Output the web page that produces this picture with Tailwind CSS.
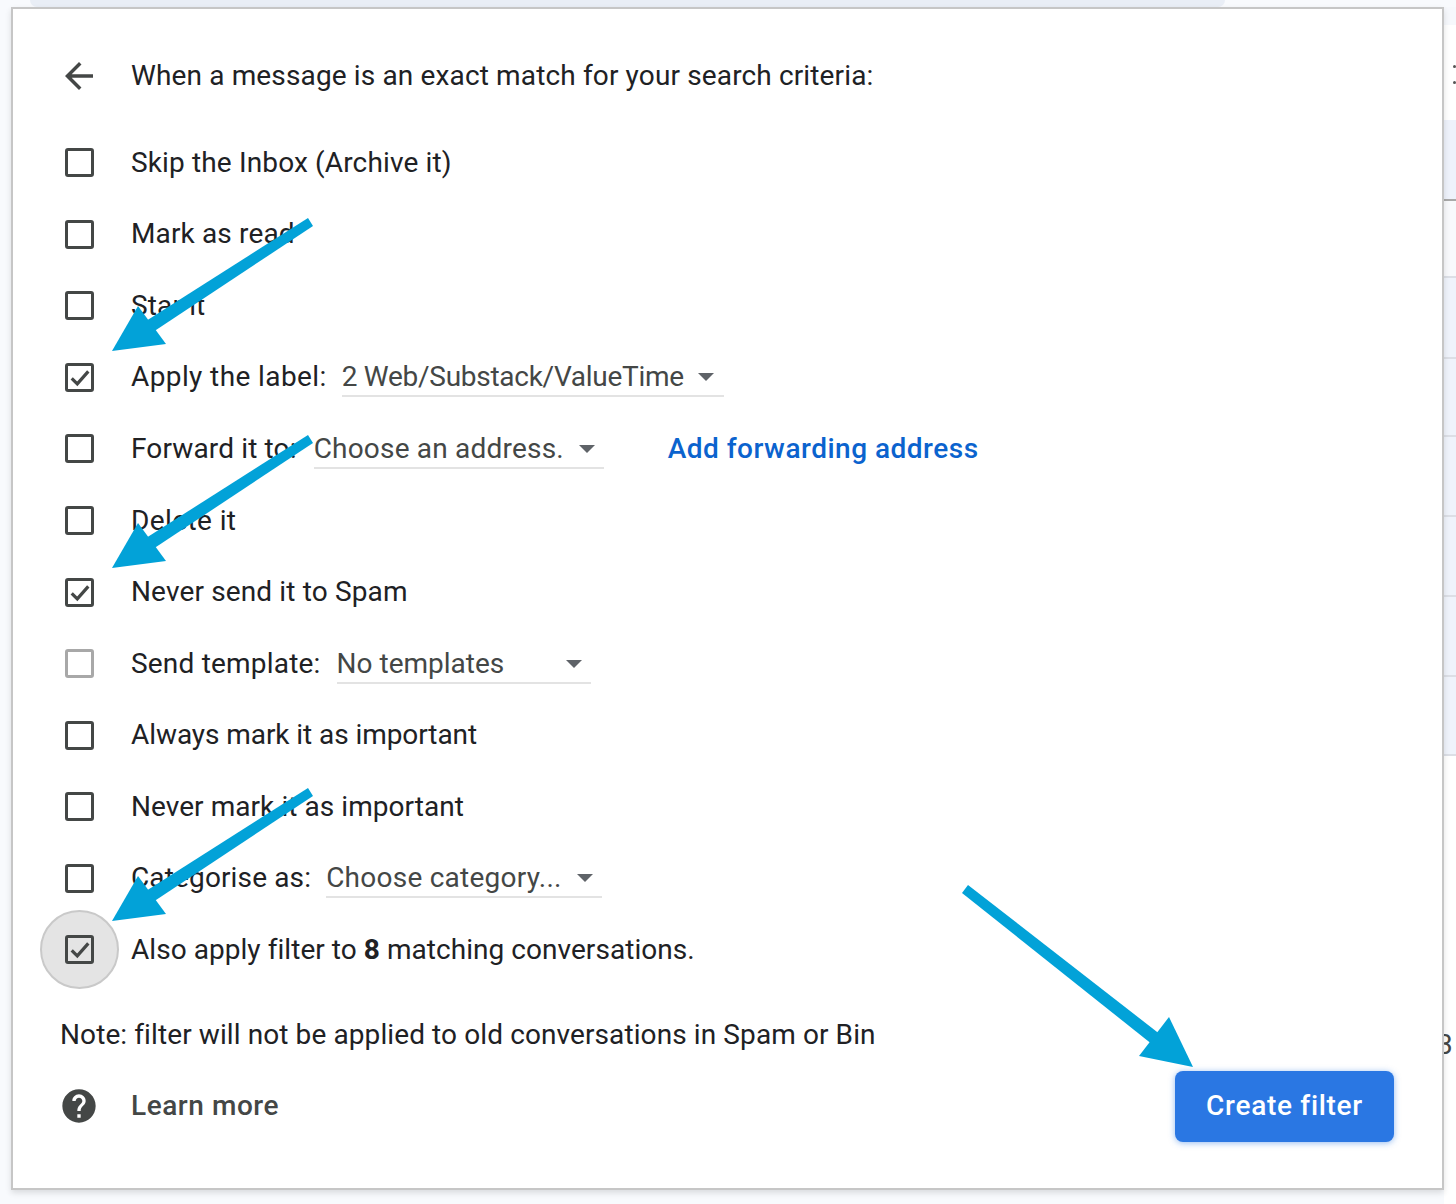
<!DOCTYPE html>
<html lang="en">
<head>
    <meta charset="UTF-8">
    <meta name="viewport" content="width=device-width, initial-scale=1.0">
    <title>Create filter</title>
    <script src="https://cdn.jsdelivr.net/npm/@tailwindcss/browser@4"></script>
</head>
<body class="relative w-[1456px] h-[1204px] overflow-hidden bg-[#f8fafd] [font-family:Roboto,sans-serif] text-[28px] tracking-[0.14px] text-[#202124]">
    <!-- strip of the page behind the dialog -->
    <div class="h-[7px] ml-[30px] w-[1195px] bg-[#e9eef6] rounded-b-[8px]"></div>

    <div class="flex items-start">
        <div class="w-[11px] shrink-0"></div>

        <!-- dialog -->
        <div class="w-[1433px] h-[1183px] shrink-0 bg-white border-2 border-[#c6c6c6] shadow-[0_3px_6px_rgba(0,0,0,0.12)] relative z-10">
            <div class="flex items-center h-[72px] mt-[31px] mb-[15px] pl-[52px]">
                <div class="w-[29px] h-[29px] flex items-center justify-center shrink-0 -translate-x-px">
                    <svg class="w-[42px] h-[42px] shrink-0" viewBox="0 0 24 24" fill="#444746"><path d="M20 11H7.83l5.59-5.59L12 4l-8 8 8 8 1.41-1.41L7.83 13H20v-2z"/></svg>
                </div>
                <span class="ml-[37px]">When a message is an exact match for your search criteria:</span>
            </div>

            <div class="pl-[52px]">
                <div class="flex items-center h-[71.55px]">
                    <div class="w-[29px] h-[29px] shrink-0 border-[3px] border-[#444746] rounded-[3px]"></div>
                    <span class="ml-[37px]">Skip the Inbox (Archive it)</span>
                </div>
                <div class="flex items-center h-[71.55px]">
                    <div class="w-[29px] h-[29px] shrink-0 border-[3px] border-[#444746] rounded-[3px]"></div>
                    <span class="ml-[37px]">Mark as read</span>
                </div>
                <div class="flex items-center h-[71.55px]">
                    <div class="w-[29px] h-[29px] shrink-0 border-[3px] border-[#444746] rounded-[3px]"></div>
                    <span class="ml-[37px]">Star it</span>
                </div>
                <div class="flex items-center h-[71.55px]">
                    <div class="w-[29px] h-[29px] shrink-0 border-[3px] border-[#444746] rounded-[3px]">
                        <svg class="w-full h-full" viewBox="0 0 23 23" fill="none" stroke="#444746" stroke-width="3.2"><path d="M3.7 12.3 9.3 17.9 20.3 5.4"/></svg>
                    </div>
                    <span class="ml-[37px] tracking-[0.4px]">Apply the label:</span>
                    <div class="relative ml-[15px] w-[382px] h-[40px] pt-[2px] flex items-center border-b-2 border-[#e3e3e3] text-[#444746] tracking-[-0.27px]">
                        <span>2 Web/Substack/ValueTime</span>
                        <div class="absolute left-[356px] top-[16px] w-0 h-0 border-x-[8px] border-x-transparent border-t-[8px] border-t-[#5f6368]"></div>
                    </div>
                </div>
                <div class="flex items-center h-[71.55px]">
                    <div class="w-[29px] h-[29px] shrink-0 border-[3px] border-[#444746] rounded-[3px]"></div>
                    <span class="ml-[37px]">Forward it to:</span>
                    <div class="relative ml-[17px] w-[290px] h-[40px] pt-[2px] flex items-center border-b-2 border-[#e3e3e3] text-[#444746] tracking-[0.2px]">
                        <span>Choose an address.</span>
                        <div class="absolute left-[265px] top-[16px] w-0 h-0 border-x-[8px] border-x-transparent border-t-[8px] border-t-[#5f6368]"></div>
                    </div>
                    <a class="ml-[64px] font-medium text-[#0b63ce] tracking-[0.5px]">Add forwarding address</a>
                </div>
                <div class="flex items-center h-[71.55px]">
                    <div class="w-[29px] h-[29px] shrink-0 border-[3px] border-[#444746] rounded-[3px]"></div>
                    <span class="ml-[37px] tracking-[0.4px]">Delete it</span>
                </div>
                <div class="flex items-center h-[71.55px]">
                    <div class="w-[29px] h-[29px] shrink-0 border-[3px] border-[#444746] rounded-[3px]">
                        <svg class="w-full h-full" viewBox="0 0 23 23" fill="none" stroke="#444746" stroke-width="3.2"><path d="M3.7 12.3 9.3 17.9 20.3 5.4"/></svg>
                    </div>
                    <span class="ml-[37px]">Never send it to Spam</span>
                </div>
                <div class="flex items-center h-[71.55px]">
                    <div class="w-[29px] h-[29px] shrink-0 border-[3px] border-[#a8a8a8] rounded-[3px]"></div>
                    <span class="ml-[37px] tracking-[0.2px]">Send template:</span>
                    <div class="relative ml-[16px] w-[254px] h-[40px] pt-[2px] flex items-center border-b-2 border-[#e3e3e3] text-[#444746] tracking-normal">
                        <span>No templates</span>
                        <div class="absolute left-[229px] top-[16px] w-0 h-0 border-x-[8px] border-x-transparent border-t-[8px] border-t-[#5f6368]"></div>
                    </div>
                </div>
                <div class="flex items-center h-[71.55px]">
                    <div class="w-[29px] h-[29px] shrink-0 border-[3px] border-[#444746] rounded-[3px]"></div>
                    <span class="ml-[37px] tracking-[-0.07px]">Always mark it as important</span>
                </div>
                <div class="flex items-center h-[71.55px]">
                    <div class="w-[29px] h-[29px] shrink-0 border-[3px] border-[#444746] rounded-[3px]"></div>
                    <span class="ml-[37px] tracking-[0.06px]">Never mark it as important</span>
                </div>
                <div class="flex items-center h-[71.55px]">
                    <div class="w-[29px] h-[29px] shrink-0 border-[3px] border-[#444746] rounded-[3px]"></div>
                    <span class="ml-[37px]">Categorise as:</span>
                    <div class="relative ml-[15px] w-[276px] h-[40px] pt-[2px] flex items-center border-b-2 border-[#e3e3e3] text-[#444746] tracking-[0.25px]">
                        <span>Choose category...</span>
                        <div class="absolute left-[251px] top-[16px] w-0 h-0 border-x-[8px] border-x-transparent border-t-[8px] border-t-[#5f6368]"></div>
                    </div>
                </div>
                <div class="flex items-center h-[71.55px]">
                    <div class="relative w-[29px] h-[29px] shrink-0">
                        <div class="absolute left-[-25px] top-[-25px] w-[79px] h-[79px] rounded-full bg-[#e4e4e4] border-2 border-[#c9c9c9]"></div>
                        <div class="relative w-[29px] h-[29px] border-[3px] border-[#444746] rounded-[3px]">
                            <svg class="w-full h-full" viewBox="0 0 23 23" fill="none" stroke="#444746" stroke-width="3.2"><path d="M3.7 12.3 9.3 17.9 20.3 5.4"/></svg>
                        </div>
                    </div>
                    <span class="ml-[37px] tracking-[0.05px]">Also apply filter to <b class="font-bold">8</b> matching conversations.</span>
                </div>
            </div>

            <div class="flex items-center h-[60px] mt-[19px] pl-[47px] tracking-[0.1px]">Note: filter will not be applied to old conversations in Spam or Bin</div>

            <div class="flex items-center justify-between h-[71px] mt-[6px] pl-[52px] pr-[48px]">
                <div class="flex items-center">
                    <div class="w-[29px] h-[29px] flex items-center justify-center shrink-0 -translate-x-px">
                        <svg class="w-[40px] h-[40px] shrink-0" viewBox="0 0 24 24" fill="#444746"><path d="M12 2C6.48 2 2 6.48 2 12s4.48 10 10 10 10-4.48 10-10S17.52 2 12 2zm1 17h-2v-2h2v2zm2.07-7.75l-.9.92C13.45 12.9 13 13.5 13 15h-2v-.5c0-1.1.45-2.1 1.17-2.83l1.24-1.26c.37-.36.59-.86.59-1.41 0-1.1-.9-2-2-2s-2 .9-2 2H8c0-2.21 1.79-4 4-4s4 1.79 4 4c0 .88-.36 1.68-.93 2.25z"/></svg>
                    </div>
                    <span class="ml-[37px] font-medium text-[#444746] tracking-[0.55px]">Learn more</span>
                </div>
                <button class="w-[219px] h-[71px] rounded-[8px] bg-[#2a77e3] text-white font-medium tracking-[0.7px] shadow-[0_1px_6px_rgba(42,119,227,0.5)]">Create filter</button>
            </div>
        </div>

        <!-- list rows peeking out at the right -->
        <div class="relative flex-1 h-[1197px] flex flex-col">
            <div class="h-[18px] bg-[#f6f8fc]"></div>
            <div class="relative h-[95px] bg-white">
                <div class="absolute left-[9px] top-[40px] w-[3px] h-[3px] rounded-full bg-[#555]"></div>
                <div class="absolute left-[9px] top-[56px] w-[3px] h-[3px] rounded-full bg-[#555]"></div>
            </div>
            <div class="h-[81px] bg-[#eef2fb] border-b-2 border-[#a9a9a9]"></div>
            <div class="h-[77px] bg-[#f8f9fc] border-b-2 border-[#dcdfe6]"></div>
            <div class="h-[81px] bg-[#eff3fb] border-b-2 border-[#dcdfe6]"></div>
            <div class="h-[78px] bg-[#eff3fb] border-b-2 border-[#dcdfe6]"></div>
            <div class="h-[80px] bg-[#eff3fb] border-b-2 border-[#dcdfe6]"></div>
            <div class="h-[80px] bg-[#eff3fb] border-b-2 border-[#dcdfe6]"></div>
            <div class="h-[80px] bg-[#eff3fb] border-b-2 border-[#dcdfe6]"></div>
            <div class="h-[79px] bg-[#eff3fb] border-b-2 border-[#dcdfe6]"></div>
            <div class="relative flex-1 bg-white overflow-hidden">
                <span class="absolute left-[-7px] top-[268px] text-[28px] text-[#444746]">3</span>
            </div>
        </div>
    </div>

    <!-- annotation arrows drawn over the screenshot -->
    <svg class="absolute inset-0 z-20 w-[1456px] h-[1204px]" viewBox="0 0 1456 1204" fill="#02a2d8" stroke="none">
        <path d="M308 218 313 226 153 332 146 321Z"/>
        <path d="M112 351 138 306 166 344Z"/>
        <path d="M308 435 313 443 153 549 146 538Z"/>
        <path d="M112 568 138 523 166 561Z"/>
        <path d="M308 788 313 796 153 902 146 891Z"/>
        <path d="M112 921 138 876 166 914Z"/>
        <path d="M968 885 962 893 1153 1045 1161 1035Z"/>
        <path d="M1193 1067 1169 1017 1139 1056Z"/>
    </svg>
</body>
</html>
